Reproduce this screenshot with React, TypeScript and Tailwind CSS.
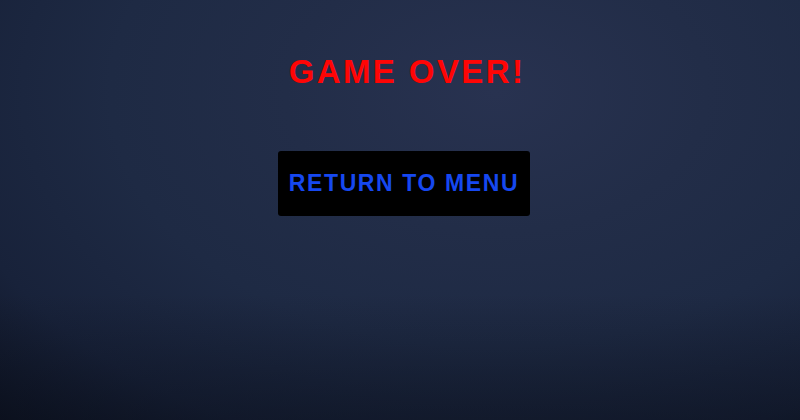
export default function App() {
  return (
    <div className="relative h-[420px] w-[800px] overflow-hidden bg-[#1e2a44]">
      {/* backdrop vignette */}
      <div className="absolute inset-0 bg-[radial-gradient(ellipse_at_62%_22%,#283250_0%,#222d48_30%,#1e2a44_55%,#18223a_80%,#0e1424_100%)]" />
      <div className="absolute inset-0 bg-[linear-gradient(to_bottom,transparent_70%,rgba(8,12,22,0.45)_100%)]" />

      <div className="relative flex flex-col items-center pt-[52px] pl-[14px] font-['Liberation_Sans',Arial,sans-serif]">
        <h1 className="text-[33px] leading-[40px] font-bold tracking-[2.4px] text-[#ff0505]">
          GAME OVER!
        </h1>
        <button className="mt-[59px] ml-[-6px] flex h-[65px] w-[252px] items-center justify-center rounded-[3px] bg-black text-[23px] font-bold tracking-[1.6px] text-[#1648f0]">
          RETURN TO MENU
        </button>
      </div>
    </div>
  );
}
